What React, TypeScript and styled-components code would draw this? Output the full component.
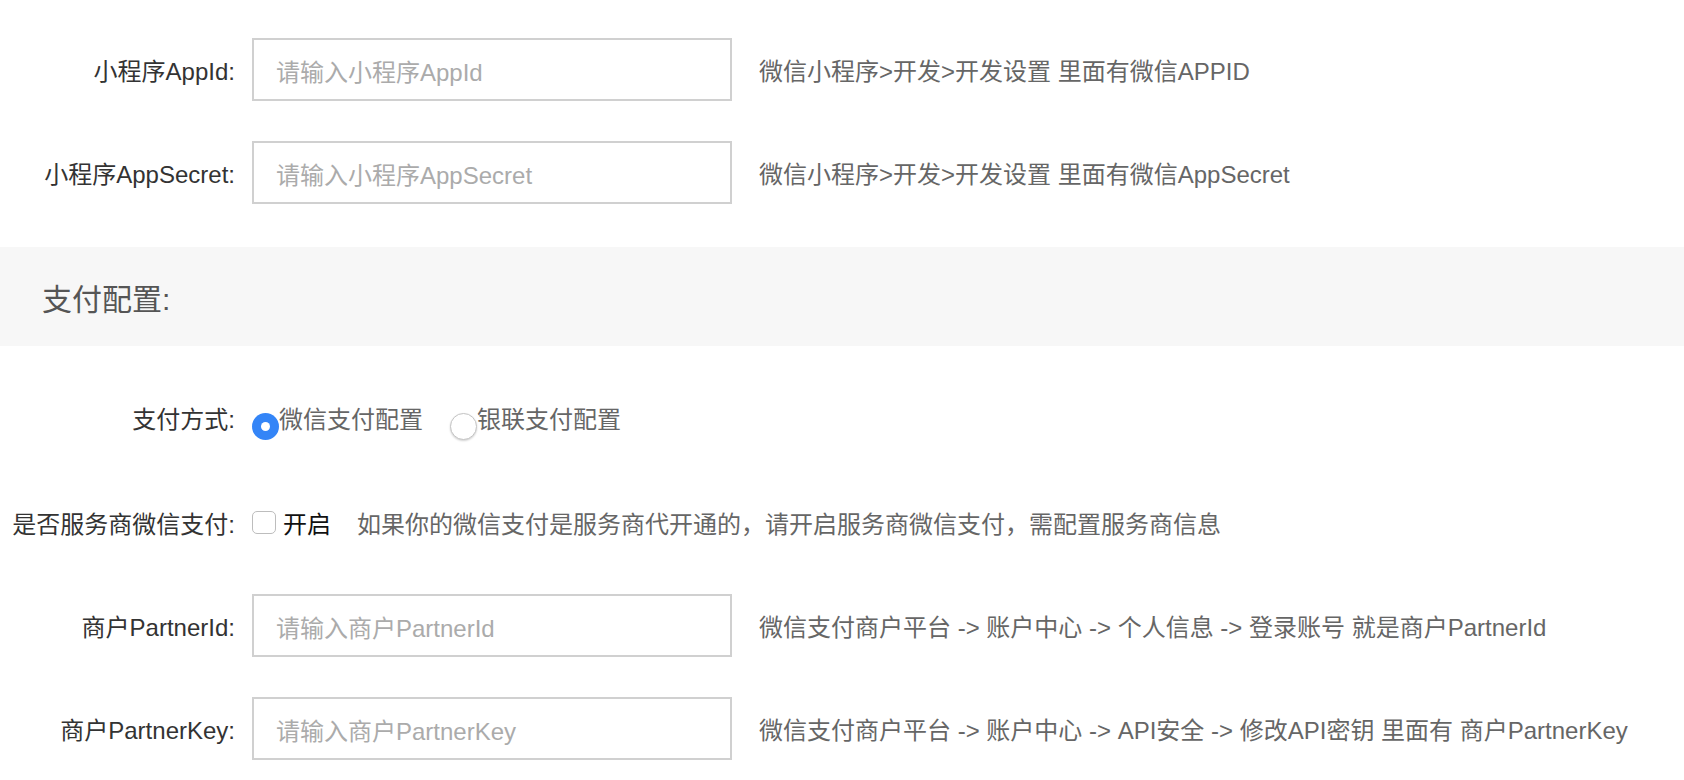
import styled, { createGlobalStyle } from "styled-components";

// ================= Global =================
const GlobalStyle = createGlobalStyle`
  html, body {
    margin: 0;
    padding: 0;
    background: #fff;
  }
  body {
    font-family: "Liberation Sans", "Noto Sans CJK SC", sans-serif;
    color: #333;
  }
`;

// ================= Styled Components =================
const Page = styled.div`
  padding-top: 38px;
  width: 1684px;
`;

const Row = styled.div<{ $gapAfter?: number }>`
  display: flex;
  align-items: center;
  height: 63px;
  margin-bottom: ${(p) => p.$gapAfter ?? 40}px;
`;

const Label = styled.label`
  flex: 0 0 235px;
  text-align: right;
  font-size: 24px;
  color: #333;
  white-space: nowrap;
  margin-right: 17px;
`;

const TextInput = styled.input`
  box-sizing: border-box;
  width: 480px;
  height: 63px;
  border: 2px solid #d0d0d0;
  padding: 7px 22px 0;
  font-family: inherit;
  font-size: 24px;
  color: #333;
  outline: none;
  background: #fff;

  &::placeholder {
    color: #ababab;
  }
`;

const Hint = styled.span<{ $indent?: number }>`
  margin-left: ${(p) => p.$indent ?? 27}px;
  font-size: 24px;
  color: #666;
  white-space: nowrap;
`;

const SectionBar = styled.div`
  display: flex;
  align-items: center;
  height: 99px;
  margin: 43px 0 40px;
  padding-left: 42px;
  background: #f7f7f7;
  font-size: 30px;
  color: #555;
`;

const RadioGroup = styled.div`
  display: flex;
  align-items: center;
  gap: 27px;
`;

const RadioOption = styled.label`
  display: flex;
  align-items: center;
  font-size: 24px;
  color: #666;
  cursor: pointer;
`;

const RadioDot = styled.span<{ $checked?: boolean }>`
  box-sizing: border-box;
  width: 27px;
  height: 27px;
  margin-top: 18px;
  border-radius: 50%;
  flex-shrink: 0;
  display: flex;
  align-items: center;
  justify-content: center;
  background: ${(p) => (p.$checked ? "#3485f7" : "#fff")};
  border: ${(p) => (p.$checked ? "none" : "1px solid #c4c4c4")};
  box-shadow: ${(p) => (p.$checked ? "none" : "0 1px 2px rgba(0,0,0,0.18)")};

  &::after {
    content: "";
    display: ${(p) => (p.$checked ? "block" : "none")};
    width: 9px;
    height: 9px;
    border-radius: 50%;
    background: #fff;
  }
`;

const CheckBox = styled.span`
  box-sizing: border-box;
  width: 24px;
  height: 23px;
  border: 1px solid #bdbdbd;
  border-radius: 5px;
  background: #fff;
  flex-shrink: 0;
`;

const CheckText = styled.span`
  margin-left: 7px;
  font-size: 24px;
  color: #111;
`;

// ================= Data =================
const miniRows = [
  {
    label: "小程序AppId:",
    placeholder: "请输入小程序AppId",
    hint: "微信小程序>开发>开发设置 里面有微信APPID",
  },
  {
    label: "小程序AppSecret:",
    placeholder: "请输入小程序AppSecret",
    hint: "微信小程序>开发>开发设置 里面有微信AppSecret",
  },
];

const partnerRows = [
  {
    label: "商户PartnerId:",
    placeholder: "请输入商户PartnerId",
    hint: "微信支付商户平台 -> 账户中心 -> 个人信息 -> 登录账号 就是商户PartnerId",
  },
  {
    label: "商户PartnerKey:",
    placeholder: "请输入商户PartnerKey",
    hint: "微信支付商户平台 -> 账户中心 -> API安全 -> 修改API密钥 里面有 商户PartnerKey",
  },
];

// ================= App =================
const App = () => {
  return (
    <Page>
      <GlobalStyle />
      {miniRows.map((r, i) => (
        <Row key={r.label} $gapAfter={i === miniRows.length - 1 ? 0 : 40}>
          <Label>{r.label}</Label>
          <TextInput placeholder={r.placeholder} />
          <Hint>{r.hint}</Hint>
        </Row>
      ))}

      <SectionBar>支付配置:</SectionBar>

      <Row $gapAfter={42}>
        <Label>支付方式:</Label>
        <RadioGroup>
          <RadioOption>
            <RadioDot $checked />
            微信支付配置
          </RadioOption>
          <RadioOption>
            <RadioDot />
            银联支付配置
          </RadioOption>
        </RadioGroup>
      </Row>

      <Row>
        <Label>是否服务商微信支付:</Label>
        <CheckBox />
        <CheckText>开启</CheckText>
        <Hint $indent={26}>如果你的微信支付是服务商代开通的，请开启服务商微信支付，需配置服务商信息</Hint>
      </Row>

      {partnerRows.map((r) => (
        <Row key={r.label}>
          <Label>{r.label}</Label>
          <TextInput placeholder={r.placeholder} />
          <Hint>{r.hint}</Hint>
        </Row>
      ))}
    </Page>
  );
};

export default App;
